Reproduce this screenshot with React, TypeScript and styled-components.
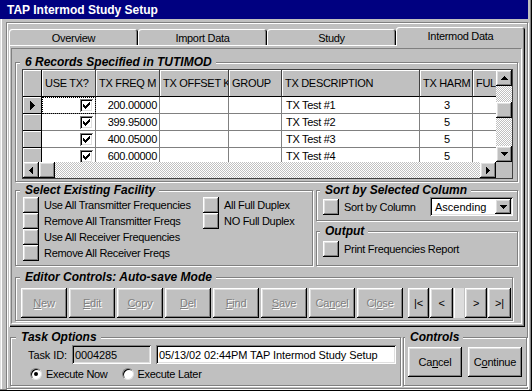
import React from "react"
import styled, { createGlobalStyle, css } from "styled-components"

const GlobalStyle = createGlobalStyle`
  * { box-sizing: border-box; }
  html, body { margin: 0; padding: 0; background: #c0c0c0; }
  body {
    font-family: "Liberation Sans", Arial, sans-serif;
    font-size: 11px;
    letter-spacing: -0.3px;
    color: #000;
  }
`

const raised = css`
  background: #c0c0c0;
  box-shadow: inset -1px -1px #000, inset 1px 1px #fff, inset -2px -2px #808080,
    inset 2px 2px #dfdfdf;
`

const sunken = css`
  box-shadow: inset 1px 1px #808080, inset -1px -1px #fff, inset 2px 2px #000,
    inset -2px -2px #dfdfdf;
`

const dither = css`
  background: repeating-conic-gradient(#c0c0c0 0% 25%, #fff 0% 50%) 0 0 / 2px 2px;
`

type Dir = "up" | "down" | "left" | "right"

const arrowPaths: Record<Dir, { w: number; h: number; d: string }> = {
  up: { w: 7, h: 4, d: "M3 0h1v1h1v1h1v1h1v1H0v-1h1v-1h1v-1h1z" },
  down: { w: 7, h: 4, d: "M0 0h7v1h-1v1h-1v1h-1v1h-1v-1h-1v-1h-1v-1h-1z" },
  left: { w: 4, h: 7, d: "M3 0h1v7h-1v-1h-1v-1h-1v-1h-1v-1h1v-1h1v-1h1z" },
  right: { w: 4, h: 7, d: "M0 0h1v1h1v1h1v1h1v1h-1v1h-1v1h-1v1h-1z" },
}

function Arrow({ dir }: { dir: Dir }) {
  const a = arrowPaths[dir]
  return (
    <svg width={a.w} height={a.h} viewBox={`0 0 ${a.w} ${a.h}`} shapeRendering="crispEdges">
      <path d={a.d} fill="#000" />
    </svg>
  )
}

function RowPointer() {
  return (
    <svg width="5" height="9" viewBox="0 0 5 9" shapeRendering="crispEdges">
      <path d="M0 0h1v1h1v1h1v1h1v1h1v1h-1v1h-1v1h-1v1h-1v1h-1z" fill="#000" />
    </svg>
  )
}

function CheckMark() {
  return (
    <svg width="7" height="7" viewBox="0 0 7 7" shapeRendering="crispEdges">
      <path
        d="M0 2h1v3H0z M1 3h1v3H1z M2 4h1v3H2z M3 3h1v3H3z M4 2h1v3H4z M5 1h1v3H5z M6 0h1v3H6z"
        fill="#000"
      />
    </svg>
  )
}

/* ---------- window chrome ---------- */

const Window = styled.div`
  width: 532px;
  height: 391px;
  display: flex;
  flex-direction: column;
  background: #c0c0c0;
  overflow: hidden;
  box-shadow: inset -1px -1px #000, inset -2px -2px #808080, inset 1px 0 #dfdfdf,
    inset 2px 0 #fff;
`

const TitleBar = styled.div`
  height: 19px;
  flex: none;
  margin-right: 4px;
  padding-left: 7px;
  display: flex;
  align-items: center;
  background: #000080;
  color: #fff;
  font-size: 12px;
  font-weight: bold;
  letter-spacing: 0;
`

const Body = styled.div`
  flex: 1;
  display: flex;
  padding: 3px 4px 2px 6px;
`

const Frame = styled.div`
  flex: 1;
  display: flex;
  flex-direction: column;
  padding: 4px 1px 1px 2px;
  border: 1px solid #808080;
  box-shadow: inset 1px 1px #fff, 1px 1px #fff;
`

/* ---------- tabs ---------- */

const TabArea = styled.div`
  display: flex;
  flex-direction: column;
  margin-right: 1px;
`

const TabStrip = styled.div`
  display: flex;
  align-items: flex-end;
  height: 19px;
`

const Tab = styled.div<{ $active?: boolean }>`
  flex: 1;
  height: ${(p) => (p.$active ? 19 : 17)}px;
  display: flex;
  align-items: center;
  justify-content: center;
  padding-bottom: ${(p) => (p.$active ? 1 : 0)}px;
  border-radius: 3px 3px 0 0;
  background: #c0c0c0;
  box-shadow: ${(p) => (p.$active ? "" : "inset 0 -1px #fff,")} inset 1px 1px #fff,
    inset -1px 0 #000, inset -2px 0 #808080;
`

const TabPage = styled.div`
  height: 281px;
  padding: 2px 3px 3px 2px;
  box-shadow: inset 1px 0 #fff, inset -1px -1px #000, inset -2px -2px #808080;
`

const Panel = styled.div`
  height: 100%;
  display: flex;
  flex-direction: column;
  padding: 6px 3px 0 3px;
  border: 1px solid;
  border-color: #808080 #fff #fff #808080;
`

/* ---------- group boxes ---------- */

const Group = styled.fieldset`
  margin: 0;
  min-width: 0;
  padding: 0;
  border: 1px solid #808080;
  box-shadow: inset 1px 1px #fff, 1px 1px #fff;
`

const Legend = styled.legend<{ $at: number }>`
  margin-left: ${(p) => p.$at}px;
  padding: 0 4px 0 5px;
  background: #c0c0c0;
  font-size: 12px;
  line-height: 14px;
  font-weight: bold;
  font-style: italic;
  letter-spacing: 0;
`

const GridGroup = styled(Group)`
  height: 127px;
  flex: none;
  padding: 0 3px 0 6px;
`

const MiddleRow = styled.div`
  height: 83px;
  flex: none;
  margin-top: 1px;
  display: flex;
  gap: 3px;
`

const FacilityGroup = styled(Group)`
  width: 298px;
  flex: none;
  padding: 0 4px 0 7px;
`

const RightColumn = styled.div`
  flex: 1;
  display: flex;
  flex-direction: column;
  gap: 3px;
`

const SortGroup = styled(Group)`
  height: 38px;
  flex: none;
  padding: 0 4px 0 6px;
`

const OutputGroup = styled(Group)`
  flex: 1;
  padding: 3px 4px 0 6px;
`

const EditorGroup = styled(Group)`
  height: 51px;
  flex: none;
  margin-top: 4px;
  width: 498px;
  padding: 4px 3px 0 5px;
`

/* ---------- data grid ---------- */

const GridFrame = styled.div`
  width: 491px;
  display: flex;
  flex-direction: column;
  border: 1px solid #404040;
  background: #c0c0c0;
`

const GridMain = styled.div`
  display: flex;
`

const Table = styled.div`
  width: 473px;
  overflow: hidden;
  display: flex;
  flex-direction: column;
`

const HeaderRow = styled.div`
  display: flex;
  height: 27px;
  flex: none;
`

const Selector = styled.div`
  width: 19px;
  flex: none;
  height: 100%;
  display: flex;
  align-items: center;
  justify-content: center;
  background: #c0c0c0;
  border-right: 1px solid #000;
  border-bottom: 1px solid #000;
  box-shadow: inset 1px 1px #fff;
`

const HeaderCell = styled.div<{ $w: number }>`
  width: ${(p) => p.$w}px;
  flex: none;
  display: flex;
  align-items: center;
  padding-left: 3px;
  white-space: nowrap;
  overflow: hidden;
  background: #c0c0c0;
  border-right: 1px solid #404040;
  border-bottom: 1px solid #000;
  box-shadow: inset 1px 1px #fff;
`

const Viewport = styled.div`
  height: 65px;
  overflow: hidden;
  background: #fff;
`

const Row = styled.div`
  display: flex;
  height: 17px;
`

type Align = "left" | "right" | "center"

const Cell = styled.div<{ $w: number; $align: Align; $focus?: boolean }>`
  width: ${(p) => p.$w}px;
  flex: none;
  height: 100%;
  display: flex;
  align-items: center;
  justify-content: ${(p) =>
    p.$align === "right" ? "flex-end" : p.$align === "center" ? "center" : "flex-start"};
  padding: 0 2px 0 4px;
  white-space: nowrap;
  overflow: hidden;
  background: #fff;
  border-right: 1px solid #808080;
  border-bottom: 1px solid #808080;
  outline: ${(p) => (p.$focus ? "1px dotted #000" : "none")};
  outline-offset: -1px;
`

const GridCheck = styled.span`
  width: 13px;
  height: 13px;
  display: inline-flex;
  align-items: center;
  justify-content: center;
  background: #fff;
  ${sunken};
`

const VScroll = styled.div`
  width: 16px;
  height: 92px;
  display: flex;
  flex-direction: column;
  ${dither};
`

const HScroll = styled.div`
  width: 473px;
  height: 16px;
  display: flex;
  ${dither};
`

const ScrollButton = styled.div`
  width: 16px;
  height: 16px;
  flex: none;
  display: flex;
  align-items: center;
  justify-content: center;
  ${raised};
`

const Track = styled.div<{ $size?: number }>`
  flex: ${(p) => (p.$size ? `0 0 ${p.$size}px` : "1")};
`

const Corner = styled.div`
  width: 16px;
  height: 16px;
  background: #c0c0c0;
`

/* ---------- controls ---------- */

const SquareButton = styled.div`
  width: 16px;
  height: 16px;
  flex: none;
  ${raised};
`

const OptionLine = styled.div`
  display: flex;
  align-items: center;
  gap: 5px;
  height: 16px;
  white-space: nowrap;
`

const FacilityGrid = styled.div`
  display: grid;
  grid-template-columns: 180px auto;
  grid-template-rows: repeat(4, 16px);
  grid-auto-flow: column;
`

const SortLine = styled.div`
  display: flex;
  align-items: center;
  height: 19px;
`

const Combo = styled.div`
  width: 83px;
  height: 19px;
  margin-left: auto;
  display: flex;
  align-items: center;
  padding: 2px;
  background: #fff;
  ${sunken};
`

const ComboText = styled.span`
  flex: 1;
  padding-left: 3px;
  letter-spacing: 0;
`

const ComboButton = styled(ScrollButton)`
  height: 15px;
`

const EditorBar = styled.div`
  display: flex;
  align-items: center;
`

const CmdButton = styled.button<{ $w: number; $off?: boolean }>`
  width: ${(p) => p.$w}px;
  height: 30px;
  flex: none;
  margin: 0;
  padding: 0;
  border: 0;
  font: inherit;
  font-size: 11px;
  letter-spacing: -0.2px;
  color: ${(p) => (p.$off ? "#808080" : "#000")};
  text-shadow: ${(p) => (p.$off ? "1px 1px #fff" : "none")};
  ${raised};
`

const MainButtons = styled.div`
  display: flex;
  gap: 2px;
`

const NavButtons = styled.div`
  display: flex;
  gap: 1px;
  margin-left: 5px;
`

const NavSlot = styled.div`
  width: 10px;
  height: 30px;
  background: #dcdcdc;
  box-shadow: inset 1px 0 #fff;
`

/* ---------- bottom area ---------- */

const BottomRow = styled.div`
  height: 56px;
  flex: none;
  margin: 3px -1px 0 1px;
  display: flex;
  gap: 2px;
`

const TaskGroup = styled(Group)`
  width: 391px;
  flex: none;
  padding: 1px 2px 0 17px;
`

const ControlsGroup = styled(Group)`
  flex: 1;
  padding: 3px 2px 0 4px;
`

const TaskLine = styled.div`
  display: flex;
  align-items: center;
  gap: 5px;
  height: 19px;
  letter-spacing: -0.1px;
`

const Field = styled.div<{ $w: number; $off?: boolean }>`
  width: ${(p) => p.$w}px;
  height: 19px;
  display: flex;
  align-items: center;
  padding-left: 3px;
  white-space: nowrap;
  overflow: hidden;
  background: ${(p) => (p.$off ? "#c0c0c0" : "#fff")};
  ${sunken};
`

const RadioLine = styled.div`
  display: flex;
  align-items: center;
  margin-top: 3px;
  padding-left: 2px;
  height: 13px;
`

const RadioItem = styled.label`
  display: flex;
  align-items: center;
  gap: 4px;
  margin-right: 14px;
`

const RadioDot = styled.span<{ $on?: boolean }>`
  width: 12px;
  height: 12px;
  border-radius: 50%;
  display: inline-flex;
  align-items: center;
  justify-content: center;
  background: #fff;
  border: 1px solid;
  border-color: #808080 #dfdfdf #dfdfdf #808080;
  box-shadow: inset 1px 1px #000;
  &::after {
    content: "";
    width: 4px;
    height: 4px;
    border-radius: 50%;
    background: ${(p) => (p.$on ? "#000" : "transparent")};
  }
`

const ControlButtons = styled.div`
  display: flex;
  gap: 6px;
`

/* ---------- data ---------- */

const tabs = ["Overview", "Import Data", "Study", "Intermod Data"]

const columns: { key: string; title: string; width: number; align: Align }[] = [
  { key: "use", title: "USE TX?", width: 54, align: "right" },
  { key: "freq", title: "TX FREQ M", width: 64, align: "right" },
  { key: "offset", title: "TX OFFSET K", width: 69, align: "left" },
  { key: "group", title: "GROUP", width: 53, align: "left" },
  { key: "desc", title: "TX DESCRIPTION", width: 138, align: "left" },
  { key: "harm", title: "TX HARM", width: 53, align: "center" },
  { key: "full", title: "FUL", width: 70, align: "left" },
]

const records = [
  { freq: "200.00000", desc: "TX Test #1", harm: "3" },
  { freq: "399.95000", desc: "TX Test #2", harm: "5" },
  { freq: "400.05000", desc: "TX Test #3", harm: "5" },
  { freq: "600.00000", desc: "TX Test #4", harm: "5" },
]

const editorButtons: { pre: string; key: string; post: string }[] = [
  { pre: "", key: "N", post: "ew" },
  { pre: "", key: "E", post: "dit" },
  { pre: "", key: "C", post: "opy" },
  { pre: "", key: "D", post: "el" },
  { pre: "", key: "F", post: "ind" },
  { pre: "", key: "S", post: "ave" },
  { pre: "Ca", key: "n", post: "cel" },
  { pre: "Cl", key: "o", post: "se" },
]

const facilityOptions = [
  "Use All Transmitter Frequencies",
  "Remove All Transmitter Freqs",
  "Use All Receiver Frequencies",
  "Remove All Receiver Freqs",
  "All Full Duplex",
  "NO Full Duplex",
]

function cellValue(key: string, r: (typeof records)[number]) {
  if (key === "use")
    return (
      <GridCheck>
        <CheckMark />
      </GridCheck>
    )
  if (key === "freq") return r.freq
  if (key === "desc") return r.desc
  if (key === "harm") return r.harm
  return ""
}

export default function App() {
  return (
    <>
      <GlobalStyle />
      <Window>
        <TitleBar>TAP Intermod Study Setup</TitleBar>
        <Body>
          <Frame>
            <TabArea>
              <TabStrip>
                {tabs.map((t) => (
                  <Tab key={t} $active={t === "Intermod Data"}>
                    {t}
                  </Tab>
                ))}
              </TabStrip>
              <TabPage>
                <Panel>
                  <GridGroup>
                    <Legend $at={-2}>6 Records Specified in TUTIMOD</Legend>
                    <GridFrame>
                      <GridMain>
                        <Table>
                          <HeaderRow>
                            <Selector />
                            {columns.map((c) => (
                              <HeaderCell key={c.key} $w={c.width}>
                                {c.title}
                              </HeaderCell>
                            ))}
                          </HeaderRow>
                          <Viewport>
                            {records.map((r, i) => (
                              <Row key={r.desc}>
                                <Selector>{i === 0 && <RowPointer />}</Selector>
                                {columns.map((c) => (
                                  <Cell
                                    key={c.key}
                                    $w={c.width}
                                    $align={c.align}
                                    $focus={i === 0 && c.key === "use"}
                                  >
                                    {cellValue(c.key, r)}
                                  </Cell>
                                ))}
                              </Row>
                            ))}
                          </Viewport>
                        </Table>
                        <VScroll>
                          <ScrollButton>
                            <Arrow dir="up" />
                          </ScrollButton>
                          <Track $size={16} />
                          <ScrollButton />
                          <Track />
                          <ScrollButton>
                            <Arrow dir="down" />
                          </ScrollButton>
                        </VScroll>
                      </GridMain>
                      <GridMain>
                        <HScroll>
                          <ScrollButton>
                            <Arrow dir="left" />
                          </ScrollButton>
                          <ScrollButton />
                          <Track />
                          <ScrollButton>
                            <Arrow dir="right" />
                          </ScrollButton>
                        </HScroll>
                        <Corner />
                      </GridMain>
                    </GridFrame>
                  </GridGroup>

                  <MiddleRow>
                    <FacilityGroup>
                      <Legend $at={-3}>Select Existing Facility</Legend>
                      <FacilityGrid>
                        {facilityOptions.map((o) => (
                          <OptionLine key={o}>
                            <SquareButton />
                            {o}
                          </OptionLine>
                        ))}
                      </FacilityGrid>
                    </FacilityGroup>
                    <RightColumn>
                      <SortGroup>
                        <Legend $at={-3}>Sort by Selected Column</Legend>
                        <SortLine>
                          <OptionLine>
                            <SquareButton />
                            Sort by Column
                          </OptionLine>
                          <Combo>
                            <ComboText>Ascending</ComboText>
                            <ComboButton>
                              <Arrow dir="down" />
                            </ComboButton>
                          </Combo>
                        </SortLine>
                      </SortGroup>
                      <OutputGroup>
                        <Legend $at={-3}>Output</Legend>
                        <OptionLine>
                          <SquareButton />
                          Print Frequencies Report
                        </OptionLine>
                      </OutputGroup>
                    </RightColumn>
                  </MiddleRow>

                  <EditorGroup>
                    <Legend $at={-1}>Editor Controls: Auto-save Mode</Legend>
                    <EditorBar>
                      <MainButtons>
                        {editorButtons.map((b) => (
                          <CmdButton key={b.pre + b.key} $w={46} $off>
                            {b.pre}
                            <u>{b.key}</u>
                            {b.post}
                          </CmdButton>
                        ))}
                      </MainButtons>
                      <NavButtons>
                        <CmdButton $w={21}>|&lt;</CmdButton>
                        <CmdButton $w={23}>&lt;</CmdButton>
                        <NavSlot />
                        <CmdButton $w={22}>&gt;</CmdButton>
                        <CmdButton $w={23}>&gt;|</CmdButton>
                      </NavButtons>
                    </EditorBar>
                  </EditorGroup>
                </Panel>
              </TabPage>
            </TabArea>

            <BottomRow>
              <TaskGroup>
                <Legend $at={-12}>Task Options</Legend>
                <TaskLine>
                  <span>Task ID:</span>
                  <Field $w={79} $off>
                    0004285
                  </Field>
                  <Field $w={240}>05/13/02 02:44PM TAP Intermod Study Setup</Field>
                </TaskLine>
                <RadioLine>
                  <RadioItem>
                    <RadioDot $on />
                    Execute Now
                  </RadioItem>
                  <RadioItem>
                    <RadioDot />
                    Execute Later
                  </RadioItem>
                </RadioLine>
              </TaskGroup>
              <ControlsGroup>
                <Legend $at={-3}>Controls</Legend>
                <ControlButtons>
                  <CmdButton $w={54}>
                    Ca<u>n</u>cel
                  </CmdButton>
                  <CmdButton $w={54}>
                    C<u>o</u>ntinue
                  </CmdButton>
                </ControlButtons>
              </ControlsGroup>
            </BottomRow>
          </Frame>
        </Body>
      </Window>
    </>
  )
}
